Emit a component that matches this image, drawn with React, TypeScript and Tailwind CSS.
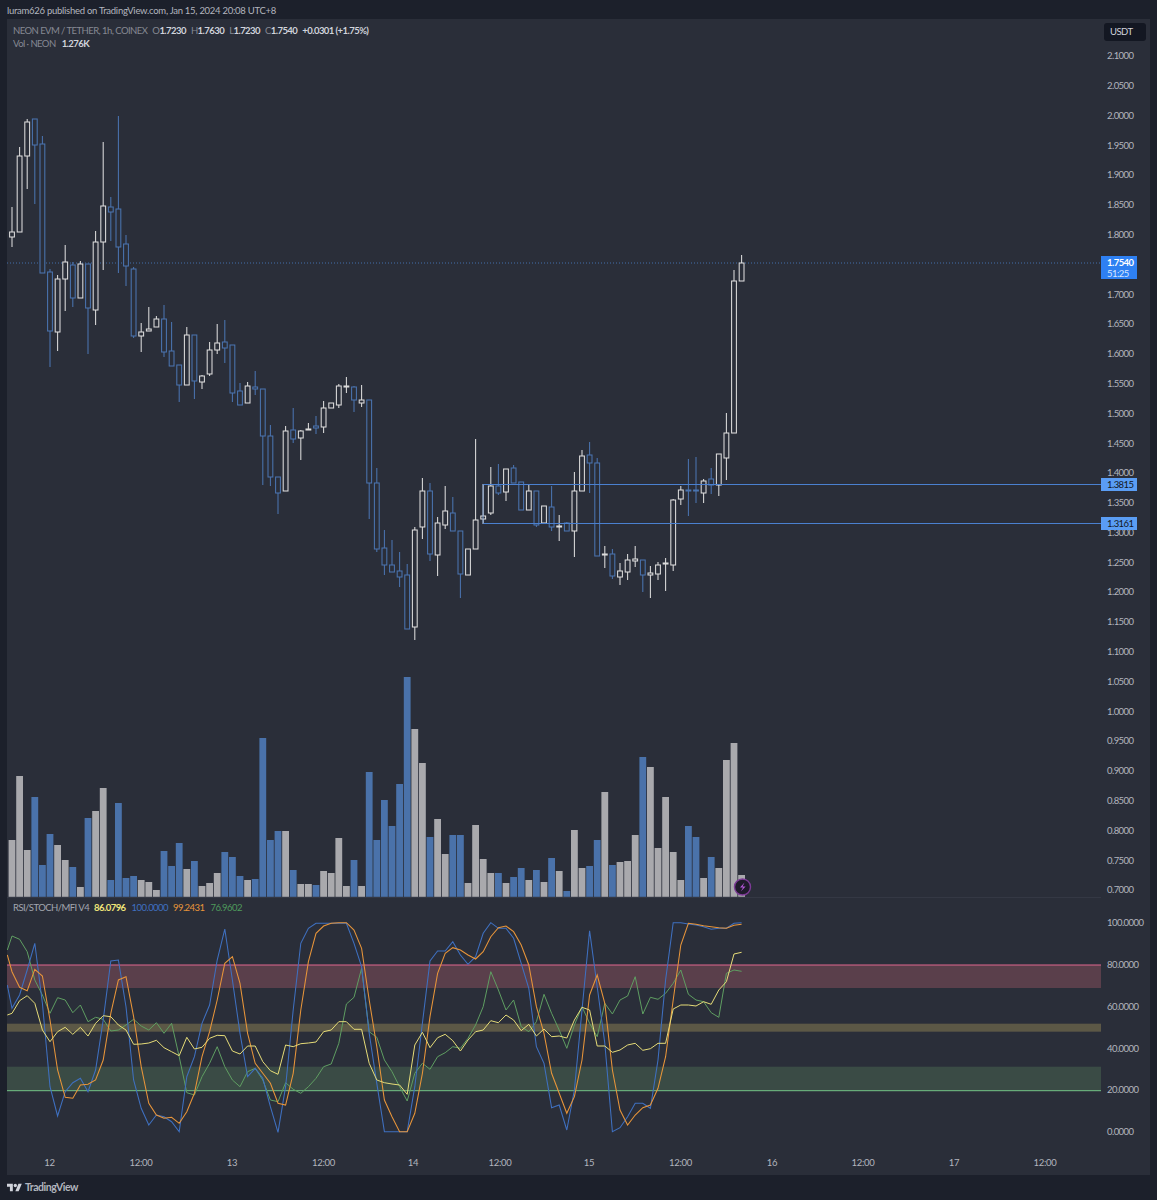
const W = "#dcdcdc";
const B = "#4a74b0";
const VW = "#a9a9ad";
const VB = "#4a72aa";
const BG = "#2a2e39";

type C = [0 | 1, number, number, number, number];
// [isBlue, wickTop, bodyTop, bodyBottom, wickBottom]
const candles: C[] = [
  [0,207,232,237,247],[0,147,156,232,232],[0,119,122,156,189],[1,119,119,145,204],[1,136,144,273,273],
  [1,269,272,331,367],[0,275,279,332,351],[0,245,262,279,311],[1,262,265,298,307],[0,261,264,298,298],
  [1,264,264,308,354],[0,231,242,310,325],[0,142,206,242,270],[1,197,207,212,241],[1,116,209,247,273],
  [1,235,244,266,286],[1,267,269,336,338],[0,323,332,336,352],[0,307,329,331,331],[0,316,319,327,327],
  [1,305,319,352,357],[1,322,351,366,366],[1,365,365,385,402],[0,327,335,385,385],[1,335,335,381,399],
  [0,375,376,382,389],[0,342,350,374,376],[0,324,343,350,354],[1,320,342,348,363],[1,345,345,393,402],
  [1,383,391,405,405],[0,382,386,403,403],[1,371,387,389,395],[1,389,389,436,485],[1,425,436,477,486],
  [1,477,477,493,514],[0,426,431,491,491],[1,408,430,439,443],[0,430,431,438,460],[0,423,429,430,430],
  [1,416,426,428,434],[0,401,408,427,433],[0,403,403,408,408],[0,384,386,405,408],[0,377,386,387,393],
  [1,386,387,400,412],[0,385,400,403,407],[1,400,400,483,519],[1,468,483,549,552],[1,530,548,565,575],
  [1,540,565,572,572],[1,552,571,577,587],[1,564,575,629,629],[0,527,530,627,640],[0,478,491,527,539],
  [1,483,491,554,561],[0,517,523,555,576],[0,486,511,525,529],[1,497,513,531,531],[1,531,531,574,598],
  [0,549,549,575,575],[0,439,520,549,549],[0,484,516,519,524],[0,467,486,513,515],[1,464,486,493,495],
  [0,469,469,492,501],[1,465,468,483,483],[1,482,482,510,510],[0,485,491,510,510],[1,491,491,525,527],
  [0,506,506,523,523],[1,486,507,527,531],[0,515,526,527,541],[1,522,523,531,531],[0,472,491,531,557],
  [0,450,456,491,491],[1,442,455,463,493],[1,458,463,556,556],[0,546,554,555,568],[1,549,554,576,579],
  [0,563,571,577,585],[0,554,560,572,580],[0,546,559,561,567],[1,560,560,575,592],[0,566,573,575,598],
  [0,562,565,574,580],[0,558,563,564,591],[0,499,500,565,571],[0,486,490,499,505],[1,459,490,491,516],
  [1,457,490,491,503],[0,479,481,493,503],[1,468,479,485,494],[0,454,454,485,496],[0,413,433,458,480],
  [0,270,281,433,433],[0,255,263,281,281],
];

// [isBlue, top]
const vols: [0 | 1, number][] = [
  [0,840],[0,776],[0,850],[1,797],[1,865],[1,834],[0,845],[0,860],[1,867],[0,887],[1,818],[0,811],[0,788],[1,880],[1,803],
  [1,878],[1,876],[0,880],[0,882],[0,890],[1,851],[1,866],[1,843],[0,869],[1,861],[0,886],[0,883],[0,873],[1,852],[1,857],
  [1,876],[0,880],[1,879],[1,738],[1,840],[1,831],[0,831],[1,870],[0,884],[0,884],[1,885],[0,871],[0,873],[0,838],[0,886],
  [1,860],[0,886],[1,772],[1,840],[1,800],[1,826],[1,784],[1,677],[0,729],[0,763],[1,837],[0,819],[0,854],[1,835],[1,835],
  [0,883],[0,825],[0,859],[0,873],[1,873],[0,883],[1,877],[1,868],[0,880],[1,870],[0,882],[1,858],[0,871],[1,891],[0,830],
  [0,868],[1,866],[1,840],[0,792],[1,865],[0,862],[0,861],[0,835],[1,757],[0,767],[0,848],[0,797],[0,852],[0,880],[1,826],
  [1,837],[0,878],[1,857],[0,868],[0,760],[0,743],[0,875],
];

// zoom-space y values: [edge, i=0..48, i=49..96]
const blue = [255,325,285,210,130,310,560,648,575,548,535,575,510,360,183,180,320,540,625,675,645,650,665,695,530,470,370,315,180,87,240,400,530,505,535,620,697,560,330,130,85,70,70,70,70,70,130,200,400,550,
  695,695,695,695,560,370,183,153,153,125,165,193,170,100,68,85,85,115,190,265,440,490,623,615,690,570,330,92,260,430,695,683,650,610,610,625,480,240,68,68,72,75,80,88,85,85,70,68];
const orange = [165,215,262,272,208,228,360,510,592,595,555,553,540,480,340,240,230,350,500,610,645,655,652,670,635,580,470,395,300,190,170,250,400,490,520,550,610,615,520,330,185,100,78,70,68,68,90,145,300,440,
  600,650,695,695,640,520,350,220,160,143,150,165,177,155,110,83,78,95,135,195,320,400,520,580,640,590,480,285,225,310,510,630,675,645,623,615,565,470,300,135,70,73,77,80,83,85,76,73];
const yellow = [345,340,302,287,310,390,425,395,382,403,382,408,370,347,350,375,390,433,432,429,421,443,455,467,412,447,442,415,406,407,453,462,438,438,485,512,523,435,440,431,429,426,395,390,365,365,388,388,490,540,
  548,552,555,583,435,397,443,413,403,422,453,420,395,390,362,368,345,360,392,373,408,387,410,408,414,360,322,330,438,438,457,450,435,430,451,446,430,430,327,315,315,318,305,313,270,245,162,157];
const green = [150,108,118,155,240,285,340,293,300,338,315,365,352,358,393,390,375,358,378,390,368,400,370,470,578,585,530,490,440,500,540,560,515,505,540,600,605,548,568,580,560,535,500,492,430,312,292,205,395,412,
  480,515,560,603,520,490,508,470,458,440,445,415,375,320,215,270,330,300,380,395,365,283,340,390,445,375,320,370,410,310,342,300,288,230,342,292,298,280,250,210,283,300,305,338,352,220,210,214];

const xOf = (i: number) => 12 + 7.6 * i;
const line = (ys: number[]) =>
  ys.map((y, k) => `${k === 0 ? 7.3 : xOf(k - 1)},${(900 + y / 3).toFixed(1)}`).join(" ");

const prices = ["2.1000","2.0500","2.0000","1.9500","1.9000","1.8500","1.8000","","1.7000","1.6500","1.6000","1.5500","1.5000","1.4500","1.4000","1.3500","1.3000","1.2500","1.2000","1.1500","1.1000","1.0500","1.0000","0.9500","0.9000","0.8500","0.8000","0.7500","0.7000"];
const osc = ["100.0000","80.0000","60.0000","40.0000","20.0000","0.0000"];

function Chart() {
  return (
    <svg viewBox="7 19 1094 1138" className="block w-[1094px] h-[1138px]">
      {/* zones */}
      <rect x="7" y="965" width="1094" height="23" fill="#5a3f4b" />
      <rect x="7" y="1023.7" width="1094" height="8" fill="#5c5846" />
      <rect x="7" y="1066.7" width="1094" height="24" fill="#3a4b45" />
      <line x1="7" x2="1101" y1="965" y2="965" stroke="#e0668f" strokeWidth="1" />
      <line x1="7" x2="1101" y1="1090.7" y2="1090.7" stroke="#74c487" strokeWidth="1" />

      {/* pane separator */}
      <line x1="7" x2="1101" y1="897.5" y2="897.5" stroke="#343844" strokeWidth="1" />

      {/* volume */}
      {vols.map(([b, t], i) => (
        <rect key={i} x={xOf(i) - 3.4} y={t} width="6.8" height={896.8 - t} fill={b ? VB : VW} />
      ))}

      {/* last price */}
      <line x1="7" x2="1101" y1="263" y2="263" stroke="#4a80c8" strokeWidth="0.8" strokeDasharray="1 2" />

      {/* candles */}
      {candles.map(([b, wt, bt, bb, wb], i) => {
        const c = b ? B : W;
        const x = xOf(i);
        const h = Math.max(bb - bt, 1);
        return (
          <g key={i} stroke={c}>
            <line x1={x} x2={x} y1={wt} y2={wb} strokeWidth="1.05" />
            <rect x={x - 2.4} y={bt} width="4.8" height={h} fill={BG} strokeWidth="1.05" />
          </g>
        );
      })}

      {/* horizontal levels */}
      <line x1="483" x2="1101" y1="484.5" y2="484.5" stroke="#4a80d0" strokeWidth="1.15" />
      <line x1="483" x2="1101" y1="523.5" y2="523.5" stroke="#4a80d0" strokeWidth="1.15" />
      <line x1="483" x2="483" y1="484" y2="524" stroke="#7e9cc8" strokeWidth="1" />

      {/* oscillator lines */}
      <polyline points={line(green)} fill="none" stroke="#5f9e62" strokeWidth="1" />
      <polyline points={line(blue)} fill="none" stroke="#3f70c0" strokeWidth="1.05" />
      <polyline points={line(orange)} fill="none" stroke="#e8953a" strokeWidth="1.05" />
      <polyline points={line(yellow)} fill="none" stroke="#e6dc78" strokeWidth="1" />

      {/* lightning badge */}
      <circle cx="742.5" cy="887" r="8" fill="#1e1a2b" stroke="#7c3a96" strokeWidth="1.4" />
      <path d="M744.5 882.5L740 887.6H743L740.8 891.5L745.6 886.4H742.6Z" fill="#b356d8" />
    </svg>
  );
}

function Logo() {
  return (
    <svg viewBox="0 0 36 28" className="w-[15px] h-[12px]" fill="#d1d4dc">
      <path d="M14 22H7V11H0V4h14v18zM28 22h-8l7.5-18h8L28 22z" />
      <circle cx="20" cy="8" r="4" />
    </svg>
  );
}

const times: [string, string][] = [
  ["12", "w-[92px]"], ["12:00", "w-[91px]"], ["13", "w-[91px]"], ["12:00", "w-[92px]"], ["14", "w-[87px]"],
  ["12:00", "w-[87px]"], ["15", "w-[91px]"], ["12:00", "w-[92px]"], ["16", "w-[91px]"], ["12:00", "w-[91px]"],
  ["17", "w-[91px]"], ["12:00", "w-[91px]"],
];

export default function App() {
  return (
    <div className="w-[1157px] h-[1200px] bg-[#1c202b] flex flex-col overflow-hidden font-['Lato',sans-serif]">
      <div className="h-[19px] pl-[7px] pt-[2px] flex items-center text-[9.5px] leading-none tracking-[-0.27px] text-[#b2b5be]">
        luram626 published on TradingView.com, Jan 15, 2024 20:08 UTC+8
      </div>

      <div className="ml-[7px] w-[1143px] h-[1156px] bg-[#2a2e39] flex flex-col">
        <div className="flex h-[1138px]">
          <div className="relative w-[1094px]">
            <Chart />
            <div className="absolute left-[6px] top-[7px] flex flex-col gap-[3px] text-[9.5px] leading-[10px] tracking-[-0.55px] text-[#868993] whitespace-nowrap">
              <div className="flex">
                <span>NEON EVM / TETHER, 1h, COINEX</span>
                <span className="ml-[5px]">O<b className="font-bold text-[#d1d4dc]">1.7230</b></span>
                <span className="ml-[5px]">H<b className="font-bold text-[#d1d4dc]">1.7630</b></span>
                <span className="ml-[5px]">L<b className="font-bold text-[#d1d4dc]">1.7230</b></span>
                <span className="ml-[5px]">C<b className="font-bold text-[#d1d4dc]">1.7540</b></span>
                <span className="ml-[5px] font-bold text-[#d1d4dc]">+0.0301 (+1.75%)</span>
              </div>
              <div className="flex">
                <span>Vol · NEON</span>
                <span className="ml-[6px] font-bold text-[#d1d4dc]">1.276K</span>
              </div>
            </div>
            <div className="absolute left-[6px] top-[884px] flex text-[9.5px] leading-[10px] tracking-[-0.55px] whitespace-nowrap">
              <span className="text-[#a3a6af]">RSI/STOCH/MFI V4</span>
              <span className="ml-[5px] font-bold text-[#f0e67a]">86.0796</span>
              <span className="ml-[6px] text-[#3f70c0]">100.0000</span>
              <span className="ml-[5px] text-[#e8953a]">99.2431</span>
              <span className="ml-[6px] text-[#4f9a5c]">76.9602</span>
            </div>
          </div>

          <div className="relative w-[49px] text-[9.5px] leading-none tracking-[-0.55px] text-[#b2b5be]">
            <div className="mt-[4px] ml-[3px] w-[42px] h-[18px] rounded-[3px] bg-[#131722] flex items-center pl-[6px] text-[#d1d4dc]">
              USDT
            </div>
            <div className="flex flex-col h-[864px] pl-[6px]">
              {prices.map((p, i) => (
                <div key={i} className="flex-1 flex items-center">{p}</div>
              ))}
            </div>
            <div className="-mt-[3px] pl-[6px] flex flex-col">
              {osc.map((p) => (
                <div key={p} className="h-[41.8px] flex items-center">{p}</div>
              ))}
            </div>

            <div className="absolute left-0 top-[237px] w-[36px] h-[23px] bg-[#2e80f2] text-white flex flex-col pl-[6px] pt-[1px] justify-center gap-[2px]">
              <span className="font-bold">1.7540</span>
              <span className="text-[#d6e6ff]">51:25</span>
            </div>
            <div className="absolute left-0 top-[459px] w-[36px] h-[13px] bg-[#5a9df4] text-[#131722] flex items-center pl-[6px]">1.3815</div>
            <div className="absolute left-0 top-[498px] w-[36px] h-[13px] bg-[#5a9df4] text-[#131722] flex items-center pl-[6px]">1.3161</div>
          </div>
        </div>

        <div className="flex items-start h-[18px] pt-[1px] ml-[-3.5px] text-[9.5px] leading-none tracking-[-0.3px] text-[#b2b5be]">
          {times.map(([t, w], i) => (
            <div key={i} className={`${w} shrink-0 text-center`}>{t}</div>
          ))}
        </div>
      </div>

      <div className="flex-1 pl-[7px] flex items-center gap-[3px]">
        <Logo />
        <span className="text-[10.5px] leading-none font-bold tracking-[-0.45px] text-[#b2b5be]">TradingView</span>
      </div>
    </div>
  );
}
